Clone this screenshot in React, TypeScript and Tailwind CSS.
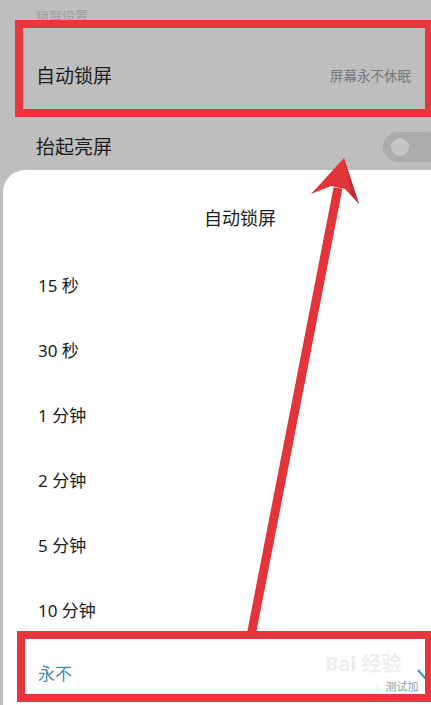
const OPTIONS = ["15 秒", "30 秒", "1 分钟", "2 分钟", "5 分钟", "10 分钟"];

function Arrow() {
  return (
    <svg
      className="pointer-events-none absolute inset-0 z-20"
      width="431"
      height="705"
      viewBox="0 0 431 705"
    >
      <line x1="251" y1="636" x2="338" y2="188" stroke="#e3343a" strokeWidth="9" />
      <polygon points="344,158 359,204 345,189 331,186 311,194" fill="#e3343a" />
      <polygon points="344,158 359,204 352,196" fill="#a8282c" opacity="0.6" />
    </svg>
  );
}

export default function App() {
  return (
    <div
      className="relative h-[705px] w-[431px] overflow-hidden bg-[#bebebe]"
      style={{ fontFamily: '"Noto Sans", "Noto Sans CJK SC", sans-serif' }}
    >
      <div className="h-[20px] pl-[36px] pt-[10px] text-[13px] leading-[13px] text-[#9d9d9d]">
        锁屏设置
      </div>

      <div className="relative z-10 ml-[15px] flex h-[97px] items-center justify-between border-[8px] border-r-[6px] border-[#e5373c] pl-[13px] pr-[14px] pt-[14px]">
        <span className="text-[19px] leading-[24px] text-[#1c1c1c]">自动锁屏</span>
        <span className="text-[13.5px] leading-[18px] text-[#777]">屏幕永不休眠</span>
      </div>

      <div className="flex h-[53px] items-center justify-between pl-[36px] pt-[6px]">
        <span className="text-[19px] leading-[24px] text-[#1c1c1c]">抬起亮屏</span>
        <div className="-mr-[12px] flex h-[30px] w-[60px] shrink-0 items-center rounded-full bg-[#acacac] pl-[8px]">
          <div className="h-[18px] w-[18px] rounded-full bg-[#c6c6c6]" />
        </div>
      </div>

      <div className="ml-[3px] h-[535px] rounded-tl-[22px] bg-white">
        <div className="pb-[23px] pl-[46px] pt-[36px] text-center text-[18px] leading-[24px] text-[#1c1c1c]">
          自动锁屏
        </div>
        {OPTIONS.map((o) => (
          <div
            key={o}
            className="flex h-[65px] items-center pl-[35px] text-[17px] leading-[22px] text-[#1c1c1c]"
          >
            {o}
          </div>
        ))}
        <div className="relative z-10 -mt-[12px] ml-[14px] flex h-[71px] items-center overflow-hidden border-[8px] border-r-[6px] border-[#e5373c] pl-[13px] pt-[14px]">
          <span className="text-[17px] leading-[22px] text-[#4a8cab]">永不</span>
          <span className="absolute left-[300px] top-[14px] text-[20px] font-bold leading-[22px] text-[#eeeeee]">
            Bai 经验
          </span>
          <span className="absolute left-[350px] top-[42px] flex items-center gap-[4px] text-[11px] leading-[12px] text-[#9a9a9a]">
            <span className="text-[#c4c4c4]">◌</span>测试加
          </span>
          <svg className="absolute -right-[10px] top-[28px]" width="18" height="14" viewBox="0 0 18 14">
            <path d="M1 3 L8 11 L17 1" fill="none" stroke="#4a8cab" strokeWidth="2" />
          </svg>
        </div>
      </div>

      <Arrow />
    </div>
  );
}
